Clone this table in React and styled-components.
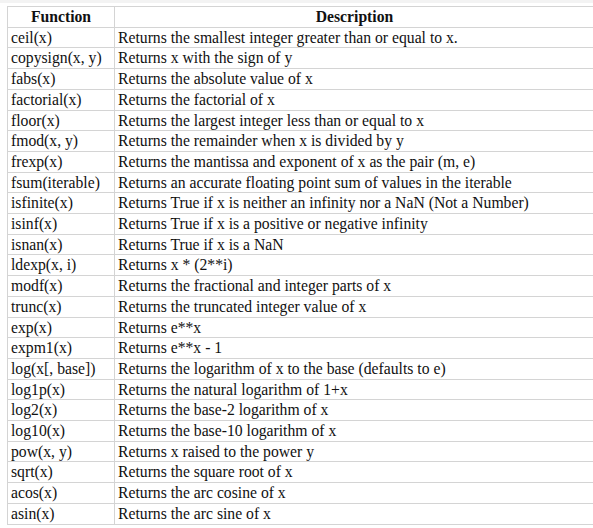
import React from "react";
import styled, { createGlobalStyle } from "styled-components";

const Global = createGlobalStyle`
  html, body { margin: 0; padding: 0; background: #fff; overflow: hidden; }
  body { font-family: "Liberation Serif", "Times New Roman", serif; color: #111; }
`;

const TopStrip = styled.div`
  height: 3px;
  background: #f3f3f3;
`;

const Wrap = styled.div`
  padding: 3px 0 0 7px;
`;

const Table = styled.table`
  border-collapse: collapse;
  width: 588px;
  font-family: "Liberation Serif", "Times New Roman", serif;
  font-size: 15.7px;
  line-height: 17.7px;
  color: #111;
`;

const Th = styled.th`
  border: 1px solid #d4d4d4;
  padding: 1px 3px;
  font-family: "Liberation Serif", "Times New Roman", serif;
  font-weight: bold;
  text-align: center;
  white-space: nowrap;
  width: ${(p) => (p.$narrow ? "100px" : "auto")};
`;

const Td = styled.td`
  border: 1px solid #d4d4d4;
  padding: 1px 3px;
  font-family: "Liberation Serif", "Times New Roman", serif;
  text-align: left;
  white-space: nowrap;
`;

const rows = [
  ["ceil(x)", "Returns the smallest integer greater than or equal to x."],
  ["copysign(x, y)", "Returns x with the sign of y"],
  ["fabs(x)", "Returns the absolute value of x"],
  ["factorial(x)", "Returns the factorial of x"],
  ["floor(x)", "Returns the largest integer less than or equal to x"],
  ["fmod(x, y)", "Returns the remainder when x is divided by y"],
  ["frexp(x)", "Returns the mantissa and exponent of x as the pair (m, e)"],
  ["fsum(iterable)", "Returns an accurate floating point sum of values in the iterable"],
  ["isfinite(x)", "Returns True if x is neither an infinity nor a NaN (Not a Number)"],
  ["isinf(x)", "Returns True if x is a positive or negative infinity"],
  ["isnan(x)", "Returns True if x is a NaN"],
  ["ldexp(x, i)", "Returns x * (2**i)"],
  ["modf(x)", "Returns the fractional and integer parts of x"],
  ["trunc(x)", "Returns the truncated integer value of x"],
  ["exp(x)", "Returns e**x"],
  ["expm1(x)", "Returns e**x - 1"],
  ["log(x[, base])", "Returns the logarithm of x to the base (defaults to e)"],
  ["log1p(x)", "Returns the natural logarithm of 1+x"],
  ["log2(x)", "Returns the base-2 logarithm of x"],
  ["log10(x)", "Returns the base-10 logarithm of x"],
  ["pow(x, y)", "Returns x raised to the power y"],
  ["sqrt(x)", "Returns the square root of x"],
  ["acos(x)", "Returns the arc cosine of x"],
  ["asin(x)", "Returns the arc sine of x"],
];

export default function App() {
  return (
    <>
      <Global />
      <TopStrip />
      <Wrap>
        <Table>
          <thead>
            <tr>
              <Th $narrow>Function</Th>
              <Th>Description</Th>
            </tr>
          </thead>
          <tbody>
            {rows.map(([f, d]) => (
              <tr key={f}>
                <Td>{f}</Td>
                <Td>{d}</Td>
              </tr>
            ))}
          </tbody>
        </Table>
      </Wrap>
    </>
  );
}
